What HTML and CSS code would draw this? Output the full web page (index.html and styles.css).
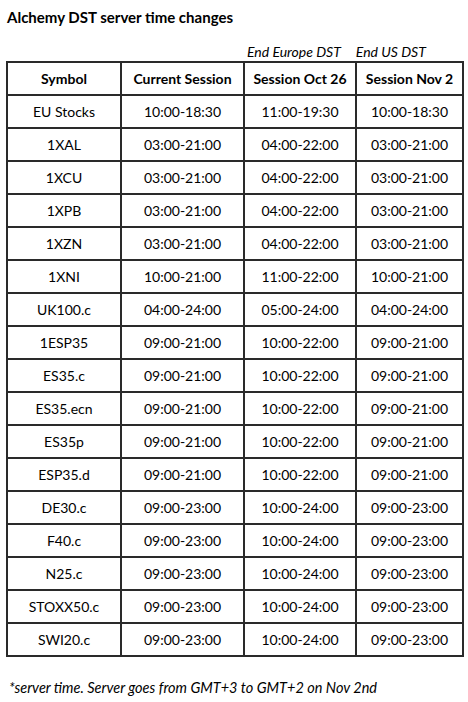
FILE: index.html
```html
<!DOCTYPE html>
<html>
<head>
<meta charset="utf-8">
<link rel="stylesheet" href="styles.css">
</head>
<body>
<h1 class="title">Alchemy DST server time changes</h1>
<div class="notes">
  <span class="note note-eu">End Europe DST</span>
  <span class="note note-us">End US DST</span>
</div>
<table class="sched">
  <colgroup>
    <col class="c1"><col class="c2"><col class="c3"><col class="c4">
  </colgroup>
  <thead>
    <tr><th>Symbol</th><th>Current Session</th><th>Session Oct 26</th><th>Session Nov 2</th></tr>
  </thead>
  <tbody>
    <tr><td>EU Stocks</td><td>10:00-18:30</td><td>11:00-19:30</td><td>10:00-18:30</td></tr>
    <tr><td>1XAL</td><td>03:00-21:00</td><td>04:00-22:00</td><td>03:00-21:00</td></tr>
    <tr><td>1XCU</td><td>03:00-21:00</td><td>04:00-22:00</td><td>03:00-21:00</td></tr>
    <tr><td>1XPB</td><td>03:00-21:00</td><td>04:00-22:00</td><td>03:00-21:00</td></tr>
    <tr><td>1XZN</td><td>03:00-21:00</td><td>04:00-22:00</td><td>03:00-21:00</td></tr>
    <tr><td>1XNI</td><td>10:00-21:00</td><td>11:00-22:00</td><td>10:00-21:00</td></tr>
    <tr><td>UK100.c</td><td>04:00-24:00</td><td>05:00-24:00</td><td>04:00-24:00</td></tr>
    <tr><td>1ESP35</td><td>09:00-21:00</td><td>10:00-22:00</td><td>09:00-21:00</td></tr>
    <tr><td>ES35.c</td><td>09:00-21:00</td><td>10:00-22:00</td><td>09:00-21:00</td></tr>
    <tr><td>ES35.ecn</td><td>09:00-21:00</td><td>10:00-22:00</td><td>09:00-21:00</td></tr>
    <tr><td>ES35p</td><td>09:00-21:00</td><td>10:00-22:00</td><td>09:00-21:00</td></tr>
    <tr><td>ESP35.d</td><td>09:00-21:00</td><td>10:00-22:00</td><td>09:00-21:00</td></tr>
    <tr><td>DE30.c</td><td>09:00-23:00</td><td>10:00-24:00</td><td>09:00-23:00</td></tr>
    <tr><td>F40.c</td><td>09:00-23:00</td><td>10:00-24:00</td><td>09:00-23:00</td></tr>
    <tr><td>N25.c</td><td>09:00-23:00</td><td>10:00-24:00</td><td>09:00-23:00</td></tr>
    <tr><td>STOXX50.c</td><td>09:00-23:00</td><td>10:00-24:00</td><td>09:00-23:00</td></tr>
    <tr><td>SWI20.c</td><td>09:00-23:00</td><td>10:00-24:00</td><td>09:00-23:00</td></tr>
  </tbody>
</table>
<p class="footnote">*server time. Server goes from GMT+3 to GMT+2 on Nov 2nd</p>
</body>
</html>
```

FILE: styles.css
```css
html, body {
  margin: 0;
  padding: 0;
  background: #ffffff;
}
body {
  font-family: Lato, "Open Sans", sans-serif;
  color: #000000;
  width: 468px;
  height: 702px;
  overflow: hidden;
}
.title {
  margin: 0;
  padding: 7px 0 0 7px;
  font-size: 15px;
  font-weight: 700;
  line-height: 20px;
  height: 27px;
  box-sizing: border-box;
}
.notes {
  display: flex;
  height: 34px;
  align-items: flex-end;
  padding-bottom: 1px;
  box-sizing: border-box;
}
.note {
  font-style: italic;
  font-size: 14px;
  line-height: 17px;
}
.note-eu {
  margin-left: 247px;
}
.note-us {
  margin-left: 15px;
}
.sched {
  margin-left: 6px;
  border-collapse: collapse;
  table-layout: fixed;
  width: 456px;
}
.c1 { width: 114px; }
.c2 { width: 123px; }
.c3 { width: 112px; }
.c4 { width: 107px; }
.sched th, .sched td {
  border: 2px solid #2a2a2a;
  height: 33px;
  padding: 0;
  text-align: center;
  vertical-align: middle;
  font-size: 14px;
  line-height: 17px;
  box-sizing: border-box;
}
.sched th {
  font-weight: 700;
}
.footnote {
  margin: 22px 0 0 9px;
  font-style: italic;
  font-size: 14.5px;
  line-height: 18px;
}
```
